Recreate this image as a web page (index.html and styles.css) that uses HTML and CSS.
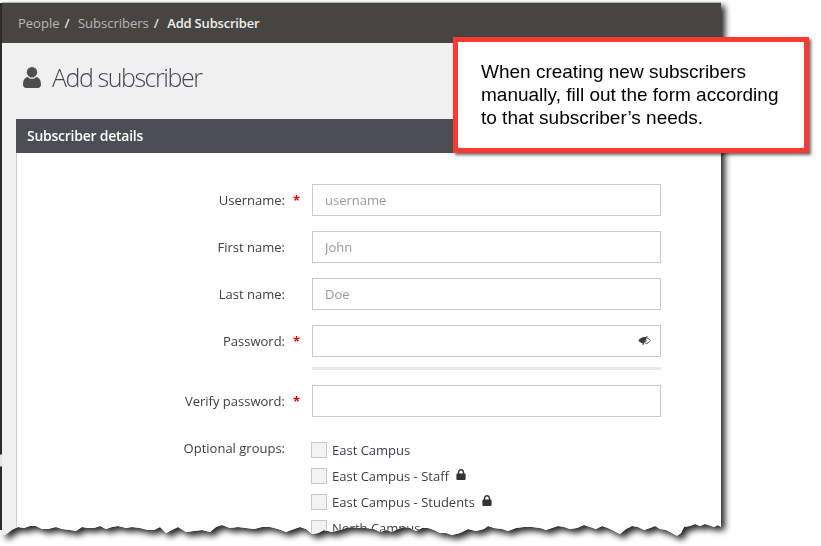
FILE: index.html
```html
<!DOCTYPE html>
<html lang="en">
<head>
    <meta charset="UTF-8">
    <title>Add subscriber</title>
    <link rel="stylesheet" href="styles.css">
</head>
<body>
<div class="edge"></div>
<div class="sheet-shadow">
    <div class="sheet">
        <div class="breadcrumb">
            <a>People</a><span class="sep">/</span>
            <a>Subscribers</a><span class="sep">/</span>
            <b>Add Subscriber</b>
        </div>
        <div class="content">
            <h1>
                <svg class="user-icon" viewBox="0 0 18 21"><circle cx="9" cy="5.3" r="5.2"/><path d="M0 17.5C0 13.5 1.5 10.6 4.6 9.9 6 11.2 7.4 11.8 9 11.8s3-.6 4.4-1.9c3.100.7 4.600 3.600 4.600 7.600 0 2.200-1.300 3.500-3.300 3.500H3.300C1.300 21 0 19.700 0 17.500z"/></svg>
                Add subscriber
            </h1>
            <div class="panel">
                <div class="panel-title">Subscriber details</div>
                <form class="panel-body">
                    <div class="row">
                        <label>Username:</label><span class="req">*</span>
                        <input type="text" placeholder="username">
                    </div>
                    <div class="row">
                        <label>First name:</label><span class="req"></span>
                        <input type="text" placeholder="John">
                    </div>
                    <div class="row">
                        <label>Last name:</label><span class="req"></span>
                        <input type="text" placeholder="Doe">
                    </div>
                    <div class="row row-password">
                        <label>Password:</label><span class="req">*</span>
                        <div class="password">
                            <input type="password">
                            <svg class="eye" viewBox="0 0 14 11"><path d="M.4 5.500C2 3.200 4.300 1.800 7 1.800c.6 0 1.100.1 1.700.2L9.400.5l1 .5-4.800 9.500-1-.5.6-1.200C3 8.200 1.500 7 .4 5.500z"/><path class="eye-line" d="M9.700 2.700c1.500.6 2.800 1.600 3.800 2.800-1.400 2-3.400 3.300-5.700 3.600M8.500 4.500c.6 1.300.2 2.600-1 3.300"/></svg>
                        </div>
                    </div>
                    <div class="strength"></div>
                    <div class="row">
                        <label>Verify password:</label><span class="req">*</span>
                        <input type="password">
                    </div>
                    <div class="row row-groups">
                        <label>Optional groups:</label><span class="req"></span>
                        <ul class="groups">
                            <li><i class="check"></i>East Campus</li>
                            <li><i class="check"></i>East Campus - Staff <svg class="lock" viewBox="0 0 10 11"><path d="M1.800 4.500V3.200C1.800 1.400 3.200 0 5 0s3.200 1.400 3.200 3.200v1.300h.5c.5 0 .9.400.9.900v4.700c0 .5-.4.900-.9.900H1.300c-.5 0-.9-.4-.9-.9V5.400c0-.5.400-.9.900-.9zm1.500 0h3.400V3.200C6.700 2.300 5.900 1.500 5 1.500s-1.700.8-1.700 1.700z"/></svg></li>
                            <li><i class="check"></i>East Campus - Students <svg class="lock" viewBox="0 0 10 11"><path d="M1.800 4.500V3.200C1.800 1.400 3.200 0 5 0s3.200 1.400 3.200 3.200v1.300h.5c.5 0 .9.400.9.900v4.700c0 .5-.4.900-.9.900H1.300c-.5 0-.9-.4-.9-.9V5.400c0-.5.400-.9.900-.9zm1.500 0h3.400V3.200C6.700 2.300 5.900 1.500 5 1.500s-1.700.8-1.700 1.700z"/></svg></li>
                            <li><i class="check"></i>North Campus</li>
                        </ul>
                    </div>
                </form>
            </div>
        </div>
    </div>
</div>
<div class="callout">
    When creating new subscribers manually, fill out the form according to that subscriber’s needs.
</div>
</body>
</html>
```

FILE: styles.css
```css
html, body {
    margin: 0;
    height: 546px;
    overflow: hidden;
    background-color: #ffffff;
}
body {
    font-family: "Open Sans", sans-serif;
    font-size: 13px;
    color: #3c4148;
}
.edge {
    position: absolute;
    left: 0;
    top: 3px;
    width: 2px;
    height: 527px;
    background: linear-gradient(#2e2d2b 451px, #5b9bd5 451px, #5b9bd5 452px, #f0f0f0 452px, #f0f0f0 463px, #5b9bd5 463px, #5b9bd5 464px, #2e2d2b 464px);
}
.sheet-shadow {
    width: 719px;
    margin: 2px 0 0 2px;
    border-top: 1px solid #b4b4b4;
    filter: drop-shadow(4px 4px 3px rgba(0, 0, 0, 0.85));
}
.sheet {
    height: 532px;
    background-color: #f0f0f0;
    clip-path: polygon(0 0, 719px 0, 719px 524px, 716px 522px, 712px 524px, 706px 522px, 703px 521px, 698px 523px, 693px 521px, 688px 523px, 682px 524px, 679px 530px, 675px 533px, 670px 530px, 664px 527px, 658px 526px, 653px 523px, 648px 525px, 642px 527px, 636px 524px, 630px 523px, 624px 526px, 618px 531px, 612px 528px, 606px 525px, 600px 523px, 594px 526px, 588px 524px, 582px 522px, 575px 525px, 568px 526px, 562px 524px, 556px 523px, 550px 525px, 544px 527px, 538px 525px, 530px 524px, 522px 524px, 514px 525px, 506px 528px, 500px 526px, 492px 525px, 486px 523px, 482px 526px, 474px 528px, 466px 526px, 458px 530px, 450px 532px, 444px 530px, 438px 530px, 432px 527px, 426px 525px, 420px 525px, 414px 528px, 408px 525px, 402px 524px, 396px 526px, 390px 529px, 384px 527px, 378px 529px, 372px 526px, 364px 525px, 356px 525px, 350px 524px, 344px 525px, 338px 527px, 330px 529px, 322px 527px, 316px 530px, 310px 531px, 304px 526px, 298px 524px, 292px 526px, 284px 529px, 276px 526px, 268px 524px, 260px 524px, 252px 526px, 244px 525px, 236px 524px, 228px 525px, 220px 522px, 214px 524px, 208px 529px, 200px 527px, 192px 528px, 184px 529px, 176px 524px, 170px 527px, 164px 530px, 158px 524px, 152px 527px, 146px 527px, 138px 525px, 130px 524px, 124px 525px, 116px 523px, 110px 524px, 104px 526px, 98px 523px, 92px 525px, 86px 525px, 80px 524px, 74px 528px, 68px 527px, 60px 526px, 54px 524px, 46px 526px, 40px 526px, 34px 523px, 28px 523px, 22px 525px, 16px 524px, 10px 527px, 6px 530px, 3px 532px, 0 532px);
}
.breadcrumb {
    height: 40px;
    background-color: #474542;
    color: #c9c7c3;
    padding-left: 16px;
    line-height: 40px;
}
.breadcrumb a {
    color: #b9b7b2;
}
.breadcrumb .sep {
    margin: 0 5px;
    color: #dddddd;
    font-weight: 600;
}
.breadcrumb b {
    color: #eeeeee;
    font-weight: 600;
    letter-spacing: -0.2px;
}
.content {
    padding: 0 0 0 14px;
}
h1 {
    display: flex;
    align-items: center;
    height: 68px;
    margin: 0 0 8px;
    padding-left: 7px;
    font-size: 25px;
    font-weight: 300;
    letter-spacing: -1.45px;
    color: #44484e;
}
.user-icon {
    width: 18px;
    height: 21px;
    margin-right: 11px;
    fill: #4b4e54;
}
.panel-title {
    height: 34px;
    line-height: 34px;
    padding-left: 11px;
    background-color: #4b4e54;
    color: #ffffff;
    font-size: 14px;
    font-weight: 600;
    letter-spacing: -0.25px;
}
.panel-body {
    height: 380px;
    padding-top: 31px;
    background-color: #ffffff;
    border-left: 1px solid #cccccc;
}
.row {
    display: flex;
    align-items: center;
    margin-bottom: 15px;
}
.row label {
    width: 268px;
    text-align: right;
}
.req {
    width: 27px;
    padding-left: 8px;
    box-sizing: border-box;
    color: #ee0000;
    font-weight: 700;
}
.row input {
    width: 349px;
    height: 32px;
    padding: 0 12px;
    box-sizing: border-box;
    border: 1px solid #c8c8c8;
    background-color: #ffffff;
    font-family: "Open Sans", sans-serif;
    font-size: 13px;
    outline: none;
}
.row input::placeholder {
    color: #999999;
}
.row-password {
    margin-bottom: 10px;
}
.password {
    position: relative;
}
.eye {
    position: absolute;
    right: 10px;
    top: 10px;
    width: 13px;
    height: 11px;
    fill: #3c3c3c;
}
.eye-line {
    fill: none;
    stroke: #3c3c3c;
    stroke-width: 1;
}
.strength {
    width: 349px;
    height: 3px;
    margin: 0 0 15px 295px;
    background-color: #e8e8e8;
}
.row-groups {
    align-items: flex-start;
    margin-top: 20px;
}
.row-groups label {
    padding-top: 2px;
}
.groups {
    list-style: none;
    margin: 0 0 0 -1px;
    padding: 0;
}
.groups li {
    display: flex;
    align-items: center;
    height: 26px;
}
.check {
    width: 14px;
    height: 14px;
    margin-right: 5px;
    border: 1px solid #c8c8c8;
    background-color: #f3f3f3;
}
.lock {
    width: 10px;
    height: 11px;
    margin: -3px 0 0 7px;
    fill: #333333;
}
.callout {
    position: absolute;
    left: 453px;
    top: 37px;
    width: 356px;
    height: 116px;
    padding: 18px 23px;
    box-sizing: border-box;
    border: 5px solid #f93a32;
    background-color: #ffffff;
    box-shadow: 2px 2px 3px rgba(0, 0, 0, 0.6);
    font-family: "Liberation Sans", Arial, sans-serif;
    font-size: 19px;
    line-height: 23px;
    color: #000000;
}
```
